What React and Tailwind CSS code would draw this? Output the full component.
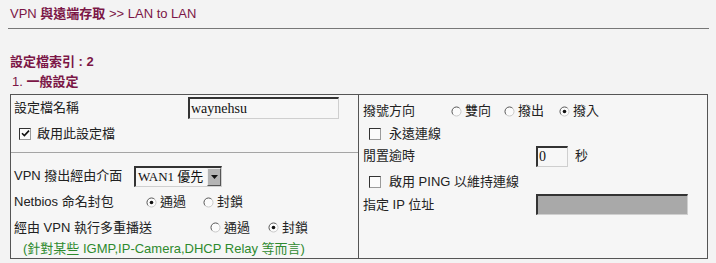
const FONT = { fontFamily: '"Liberation Sans", "Noto Sans CJK TC", sans-serif' }

function Radio({ checked }) {
  return (
    <svg width="11" height="11" viewBox="0 0 11 11" className="shrink-0" aria-hidden>
      <circle cx="5.5" cy="5.5" r="4.5" fill="#fbfbfb" />
      <path d="M2.3 8.7A4.5 4.5 0 0 1 8.7 2.3" fill="none" stroke="#555" strokeWidth="1" />
      <path d="M8.7 2.3A4.5 4.5 0 0 1 2.3 8.7" fill="none" stroke="#c8c8c8" strokeWidth="1" />
      {checked && <circle cx="5.5" cy="5.5" r="1.8" fill="#111" />}
    </svg>
  )
}

function Check({ checked }) {
  return (
    <span className="w-[12px] h-[12px] shrink-0 bg-[#fbfbfb] border-t border-l border-[#333] border-b border-r border-b-[#9a9a9a] border-r-[#9a9a9a] flex items-center justify-center">
      {checked && (
        <svg width="9" height="9" viewBox="0 0 9 9" aria-hidden>
          <path d="M1 4.2 L3.4 6.6 L8 1.6" fill="none" stroke="#111" strokeWidth="1.6" />
        </svg>
      )}
    </span>
  )
}

function Opt({ checked, label, className = '' }) {
  return (
    <span className={`flex items-center gap-[3px] ${className}`}>
      <Radio checked={checked} />
      <span>{label}</span>
    </span>
  )
}

const sunken =
  'border-t-2 border-l-2 border-r border-b border-t-[#333] border-l-[#333] border-r-[#cfcfcf] border-b-[#cfcfcf]'

export default function App() {
  return (
    <div className="w-[716px] h-[263px] bg-[#f3f3f3] text-[13px] text-[#222] overflow-hidden" style={FONT}>
      <div className="ml-[10px] mt-[6px] leading-[16px] text-[#7b1646]">
        VPN <span className="font-bold">與遠端存取</span> &gt;&gt; LAN to LAN
      </div>
      <div className="ml-[8px] mt-[6px] w-[701px] h-px bg-[#777]" />

      <div className="ml-[10px] mt-[25px] leading-[16px] text-[#7b1646] font-bold">設定檔索引 : 2</div>
      <div className="ml-[12px] mt-[4px] leading-[16px] text-[#7b1646]">
        1. <span className="font-bold">一般設定</span>
      </div>

      {/* 設定表格 */}
      <div className="ml-[10px] mt-[4px] w-[698px] h-[165px] border border-[#555] bg-[#f6f6f6] flex">
        <div className="w-[348px] border-r border-[#555] flex flex-col">
          <div className="h-[26px] pl-[3px] flex items-center">
            <span className="w-[174px]">設定檔名稱</span>
            <div
              className={`w-[151px] h-[22px] ${sunken} bg-[#f7f7f7] flex items-center pl-[1px] text-[14px] text-[#111]`}
              style={{ fontFamily: '"Liberation Serif", serif' }}
            >
              waynehsu
            </div>
          </div>
          <div className="h-[25px] pl-[8px] flex items-center gap-[6px]">
            <Check checked />
            <span>啟用此設定檔</span>
          </div>
          <div className="mt-[6px] h-px bg-[#a5a5a5]" />

          <div className="mt-[11px] h-[24px] pl-[3px] flex items-center">
            <span className="w-[120px]">VPN 撥出經由介面</span>
            <div className={`w-[88px] h-[21px] ${sunken} bg-[#f7f7f7] flex items-stretch`}>
              <span
                className="flex-1 flex items-center pl-[2px] text-[13px] text-[#111] whitespace-nowrap overflow-hidden"
                style={{ fontFamily: '"Liberation Serif", "Noto Sans CJK TC", serif' }}
              >
                WAN1 優先
              </span>
              <span className="w-[14px] shrink-0 bg-[#b4b4b4] border-t border-l border-[#eee] border-r border-b border-r-[#555] border-b-[#555] flex items-center justify-center">
                <svg width="7" height="4" viewBox="0 0 7 4" aria-hidden>
                  <path d="M0 0 H7 L3.5 4 Z" fill="#111" />
                </svg>
              </span>
            </div>
          </div>

          <div className="h-[28px] pl-[3px] flex items-center">
            <span className="w-[132px]">Netbios 命名封包</span>
            <Opt checked label="通過" />
            <Opt label="封鎖" className="ml-[17px]" />
          </div>

          <div className="h-[23px] pl-[3px] flex items-center">
            <span className="w-[196px]">經由 VPN 執行多重播送</span>
            <Opt label="通過" />
            <Opt checked label="封鎖" className="ml-[18px]" />
          </div>

          <div className="h-[19px] pl-[12px] flex items-center text-[#2e8a2e]">
            (針對某些 IGMP,IP-Camera,DHCP Relay 等而言)
          </div>
        </div>

        <div className="flex-1 flex flex-col pt-[4px]">
          <div className="h-[24px] pl-[4px] flex items-center">
            <span className="w-[88px]">撥號方向</span>
            <Opt label="雙向" />
            <Opt label="撥出" className="ml-[13px]" />
            <Opt checked label="撥入" className="ml-[15px]" />
          </div>
          <div className="h-[22px] pl-[10px] flex items-center gap-[8px]">
            <Check />
            <span>永遠連線</span>
          </div>
          <div className="h-[22px] pl-[4px] flex items-center">
            <span className="w-[173px]">閒置逾時</span>
            <div
              className={`w-[32px] h-[21px] ${sunken} bg-[#f7f7f7] flex items-center pl-[1px] text-[14px] text-[#111]`}
              style={{ fontFamily: '"Liberation Serif", serif' }}
            >
              0
            </div>
            <span className="ml-[7px]">秒</span>
          </div>
          <div className="h-[27px] pt-[2px] pl-[10px] flex items-center gap-[8px]">
            <Check />
            <span>啟用 PING 以維持連線</span>
          </div>
          <div className="h-[21px] pl-[4px] flex items-center">
            <span className="w-[173px]">指定 IP 位址</span>
            <div className={`w-[152px] h-[21px] ${sunken} bg-[#a9a9a9]`} />
          </div>
        </div>
      </div>
    </div>
  )
}
